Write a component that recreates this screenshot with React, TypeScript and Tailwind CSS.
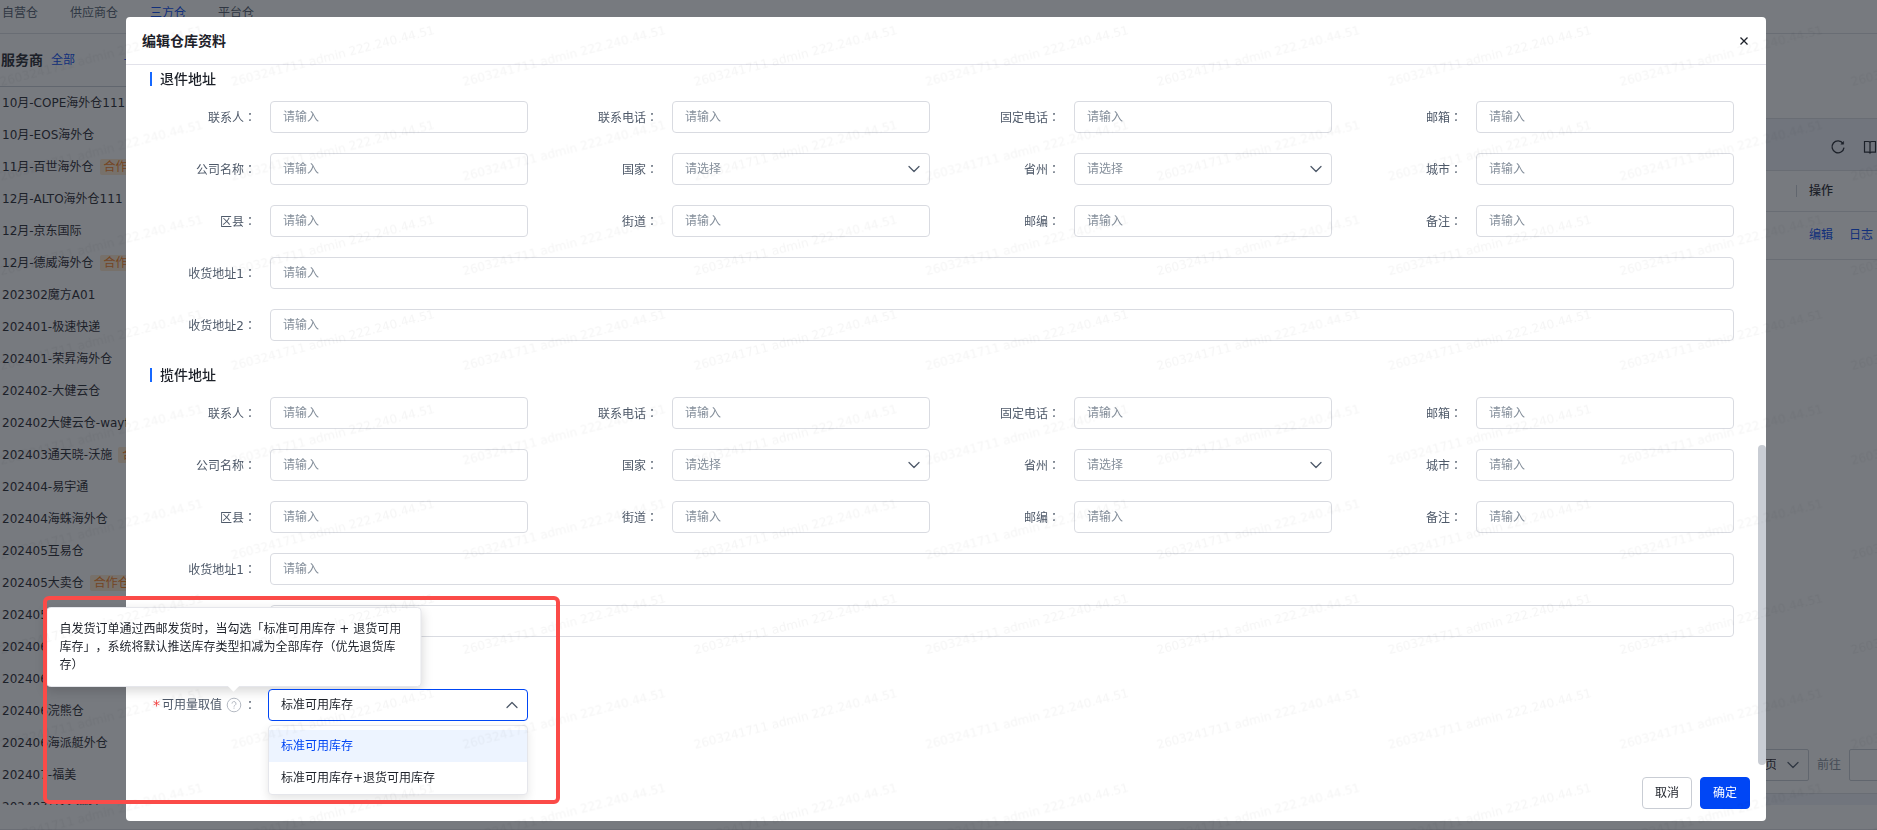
import { useState } from "react";
import { ChevronDown, ChevronUp } from "lucide-react";

const tabs = ["自营仓", "供应商仓", "三方仓", "平台仓"];

const providers: { name: string; tag?: boolean }[] = [
  { name: "10月-COPE海外仓111" },
  { name: "10月-EOS海外仓" },
  { name: "11月-百世海外仓", tag: true },
  { name: "12月-ALTO海外仓111" },
  { name: "12月-京东国际" },
  { name: "12月-德威海外仓", tag: true },
  { name: "202302魔方A01" },
  { name: "202401-极速快递" },
  { name: "202401-荣昇海外仓" },
  { name: "202402-大健云仓" },
  { name: "202402大健云仓-wayfair" },
  { name: "202403通天晓-沃施", tag: true },
  { name: "202404-易宇通" },
  { name: "202404海蛛海外仓" },
  { name: "202405互易仓" },
  { name: "202405大卖仓", tag: true },
  { name: "202405" },
  { name: "202406" },
  { name: "202406" },
  { name: "202406浣熊仓" },
  { name: "202406海派艇外仓" },
  { name: "202407-福美" },
  { name: "202407高仓-测试" },
];

type FieldDef = { label: string; type?: "select"; wide?: boolean };

const addressFields: FieldDef[] = [
  { label: "联系人" },
  { label: "联系电话" },
  { label: "固定电话" },
  { label: "邮箱" },
  { label: "公司名称" },
  { label: "国家", type: "select" },
  { label: "省州", type: "select" },
  { label: "城市" },
  { label: "区县" },
  { label: "街道" },
  { label: "邮编" },
  { label: "备注" },
  { label: "收货地址1", wide: true },
  { label: "收货地址2", wide: true },
];

const stockOptions = ["标准可用库存", "标准可用库存+退货可用库存"];

function Colon() {
  return <span className="font-['Noto_Sans_CJK_TC',sans-serif]">：</span>;
}

function Field({ id, field }: { id: string; field: FieldDef }) {
  return (
    <div className={field.wide ? "col-span-4 flex items-center" : "flex items-center"}>
      <label htmlFor={id} className="w-36 shrink-0 pr-3.5 text-right text-[#4e5969]">
        {field.label}
        <Colon />
      </label>
      {field.type === "select" ? (
        <div className="relative min-w-0 flex-1">
          <select id={id} className="h-8 w-full appearance-none rounded-[4px] border border-[#d9dbe1] bg-white px-3 text-[#86909c] outline-none">
            <option>请选择</option>
          </select>
          <ChevronDown className="pointer-events-none absolute top-1.5 right-1.5 size-5 text-[#4e5969]" strokeWidth={1.5} />
        </div>
      ) : (
        <input id={id} placeholder="请输入" className="h-8 w-full min-w-0 flex-1 rounded-[4px] border border-[#d9dbe1] bg-white px-3 outline-none placeholder:text-[#86909c]" />
      )}
    </div>
  );
}

function AddressSection({ title, prefix }: { title: string; prefix: string }) {
  return (
    <section>
      <h3 className="mb-2 flex h-7 items-center gap-2 pl-6 text-sm font-medium text-[#1d2129]">
        <span className="h-3.5 w-0.5 bg-[#1668ff]" />
        {title}
      </h3>
      <div className="grid grid-cols-4 gap-y-5 pr-8">
        {addressFields.map((f, i) => (
          <Field key={f.label} id={`${prefix}-${i}`} field={f} />
        ))}
      </div>
    </section>
  );
}

function StockField() {
  const [value, setValue] = useState(stockOptions[0]);

  return (
    <div className="mt-8 grid grid-cols-4 pr-8">
      <div className="flex items-center">
        <div className="flex w-[142px] shrink-0 items-center justify-end pr-3 text-[#4e5969]">
          <span className="pr-0.5 text-sm text-[#f53f3f]">*</span>
          <label htmlFor="stock">可用量取值</label>
          <span className="relative mr-0.5 ml-1">
            <svg viewBox="0 0 16 16" className="size-4 text-[#b4b9c2]" fill="none" stroke="currentColor">
              <circle cx="8" cy="8" r="6.8" />
              <path d="M6 6.6a2 2 0 1 1 3 1.7c-.7.4-1 .7-1 1.3M8 10.6v1.1" />
            </svg>
            <span role="tooltip" className="absolute bottom-full left-1/2 mb-2.5 w-[375px] -translate-x-1/2 rounded-[4px] border border-[#e5e6eb] bg-white px-3 py-3 leading-[18px] text-[#1d2129] shadow-[0_4px_12px_rgba(0,0,0,0.16)] [text-spacing-trim:space-all]">
              自发货订单通过西邮发货时，当勾选「标准可用库存 + 退货可用库存」，系统将默认推送库存类型扣减为全部库存（优先退货库存）
              <span className="absolute -bottom-1 left-1/2 size-2 -translate-x-1/2 rotate-45 bg-white" />
            </span>
          </span>
          <Colon />
        </div>
        <div className="relative min-w-0 flex-1">
          <select
            id="stock"
            value={value}
            onChange={(e) => setValue(e.target.value)}
            className="h-8 w-full appearance-none rounded-[4px] border border-[#0046f5] bg-white px-3 text-[#1d2129] outline-none"
          >
            {stockOptions.map((o) => (
              <option key={o}>{o}</option>
            ))}
          </select>
          <ChevronUp className="pointer-events-none absolute top-1.5 right-1.5 size-5 text-[#4e5969]" strokeWidth={1.5} />
          <ul role="listbox" className="absolute top-full right-0 left-0 mt-1 rounded-[4px] border border-[#e5e6eb] bg-white pt-1 shadow-[0_4px_10px_rgba(0,0,0,0.1)]">
            {stockOptions.map((o) => (
              <li
                key={o}
                role="option"
                aria-selected={o === value}
                onClick={() => setValue(o)}
                className={`flex h-8 items-center px-3 ${o === value ? "bg-[#edf4ff] text-[#0046f5]" : "text-[#1d2129]"}`}
              >
                {o}
              </li>
            ))}
          </ul>
        </div>
      </div>
    </div>
  );
}

function Background() {
  return (
    <div className="flex h-screen flex-col overflow-hidden border-b border-[#e0e1e6] bg-white pb-6">
      <nav className="flex h-[34px] shrink-0 gap-8 border-b border-[#dcdee3] pt-[5px] pl-0.5 text-[#4e5969]">
        {tabs.map((t) => (
          <a key={t} href="#" className={t === "三方仓" ? "text-[#0046f5]" : ""}>
            {t}
          </a>
        ))}
      </nav>
      <div className="flex min-h-0 flex-1">
        <aside className="flex w-52 shrink-0 flex-col">
          <div className="flex h-[53px] shrink-0 items-center border-b border-[#c9cdd4] pl-px">
            <h2 className="text-sm font-bold">服务商</h2>
            <a href="#" className="ml-2 text-[#0046f5]">全部</a>
            <a href="#" className="ml-12 text-[#0046f5]">+ 新增</a>
          </div>
          <ul className="min-h-0 flex-1 overflow-hidden whitespace-nowrap">
            {providers.map((p, i) => (
              <li key={i} className="flex h-8 items-center pl-0.5">
                {p.name}
                {p.tag && <span className="ml-1.5 rounded-[2px] bg-[#ffe8cc] px-1 text-[#f77b14]">合作仓</span>}
              </li>
            ))}
          </ul>
        </aside>
        <main className="flex min-w-0 flex-1 flex-col">
          <div className="h-[84px] shrink-0" />
          <div className="flex h-[53px] shrink-0 items-center justify-end gap-4 border-y border-[#dcdee3] bg-[#f0f2fb] pt-1 text-[#1d2129]">
            <button aria-label="刷新">
              <svg viewBox="0 0 16 16" className="size-4" fill="none" stroke="currentColor" strokeWidth="1.3">
                <path d="M13 4.4A6 6 0 1 0 14 8.6" />
                <path d="M13.6 2.4v2.8h-2.8z" fill="currentColor" strokeWidth="0.5" />
              </svg>
            </button>
            <button aria-label="列设置" className="-mr-px">
              <svg viewBox="0 0 16 16" className="size-4" fill="none" stroke="currentColor" strokeWidth="1.2">
                <path d="M8 3.4C7.6 2.8 7 2.5 6.2 2.5H2.5v10.6h4c.7 0 1.2.2 1.5.8.3-.6.8-.8 1.5-.8h4V2.5H9.8c-.8 0-1.4.3-1.8.9zM8 3.4v10.5" />
              </svg>
            </button>
          </div>
          <table className="w-full table-fixed text-left">
            <thead>
              <tr className="h-10 border-b border-[#dcdee3]">
                <th />
                <th className="w-[81px] p-0 font-medium">
                  <span className="inline-block h-3 border-l border-[#c9cdd4] pl-3 leading-3">操作</span>
                </th>
              </tr>
            </thead>
            <tbody>
              <tr className="h-12 border-b border-[#dcdee3]">
                <td />
                <td className="p-0 pl-[13px] whitespace-nowrap text-[#0046f5]">
                  <a href="#">编辑</a>
                  <a href="#" className="ml-4">日志</a>
                </td>
              </tr>
            </tbody>
          </table>
          <div className="mt-auto flex shrink-0 items-center justify-end pb-3 text-[#86909c]">
            <div className="relative">
              <select aria-label="每页条数" className="h-8 w-24 appearance-none rounded-[2px] border border-[#c9cdd4] bg-white pr-8 pl-3 text-[#1d2129]">
                <option>100条/页</option>
              </select>
              <ChevronDown className="pointer-events-none absolute top-1.5 right-1.5 size-5 text-[#4e5969]" strokeWidth={1.5} />
            </div>
            <label htmlFor="page" className="px-2">前往</label>
            <input id="page" className="-mr-4 h-8 w-11 shrink-0 rounded-[2px] border border-[#c9cdd4]" />
          </div>
          <div className="h-3 shrink-0 border-t border-[#dcdee3] bg-[#f0f2fb]" />
        </main>
      </div>
    </div>
  );
}

function Watermark() {
  return (
    <svg className="pointer-events-none fixed inset-0 z-30 size-full" aria-hidden="true">
      <defs>
        <pattern id="wm" width="231.4" height="94.7" x="-3" y="-8" patternUnits="userSpaceOnUse">
          <text x="4" y="94" transform="rotate(-14.5 4 94)" fontSize="12" fontFamily="DejaVu Sans" fill="#000" fillOpacity="0.04">
            2603241711 admin 222.240.44.51
          </text>
        </pattern>
      </defs>
      <rect width="100%" height="100%" fill="url(#wm)" />
    </svg>
  );
}

export default function App() {
  return (
    <div className="font-['DejaVu_Sans','Noto_Sans_CJK_SC',sans-serif] text-xs text-[#1d2129]">
      <Background />

      <div className="fixed inset-0 z-10 flex bg-[#1d2129]/60 pt-[17px] pr-[111px] pb-[9px] pl-[126px]">
        <div role="dialog" aria-label="编辑仓库资料" className="flex min-w-0 flex-1 flex-col rounded-[4px] bg-white">
          <header className="flex h-12 shrink-0 items-center justify-between border-b border-[#e2e2ea] px-4">
            <h1 className="text-sm font-bold">编辑仓库资料</h1>
            <button aria-label="关闭" className="p-0.5">
              <svg viewBox="0 0 8 8" className="size-2" fill="none" stroke="currentColor" strokeWidth="1.3">
                <path d="M.5.5l7 7M7.5.5l-7 7" />
              </svg>
            </button>
          </header>

          <div className="relative flex min-h-0 flex-1 flex-col gap-5">
            <AddressSection title="退件地址" prefix="return" />
            <AddressSection title="揽件地址" prefix="pickup" />
            <StockField />
            {/* scrollbar thumb */}
            <div className="absolute right-0 bottom-0 h-80 w-2 rounded-full bg-[#c9cdd4]" />
          </div>

          <footer className="flex shrink-0 justify-end gap-2 px-4 pt-3 pb-3">
            <button className="h-8 rounded-[4px] border border-[#c9cdd4] bg-white px-3">取消</button>
            <button className="h-8 rounded-[4px] border border-[#0046f5] bg-[#0046f5] px-3 text-white">确定</button>
          </footer>
        </div>
      </div>

      {/* highlight frame around the stock field */}
      <div className="pointer-events-none fixed top-[596px] left-[43px] z-40 h-[208px] w-[517px] rounded-[6px] border-4 border-[#fb4b48]" />
      <Watermark />
    </div>
  );
}
